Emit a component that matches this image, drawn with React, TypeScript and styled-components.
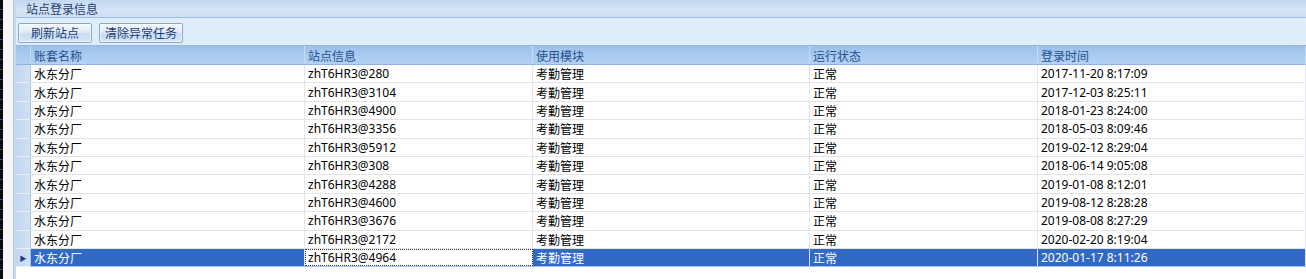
import React from "react";
import styled, { createGlobalStyle } from "styled-components";

const Global = createGlobalStyle`
  html, body { margin: 0; padding: 0; background: #ffffff; overflow: hidden; }
  body { font-family: "Noto Sans", "Noto Sans CJK SC", sans-serif; font-size: 12px; }
`;

const Page = styled.div`
  display: flex;
  width: 1306px;
  height: 279px;
  background: #ffffff;
`;

const EdgeBar = styled.div`
  width: 3px;
  background: repeating-linear-gradient(to bottom, #0a0a0a 0 9px, #2a4f8c 9px 10px);
  flex: none;
`;

const Gutter = styled.div`
  width: 10px;
  background: #f4f6f9;
  border-right: 1px solid #b7c7dc;
  flex: none;
`;

const Panel = styled.div`
  flex: 1;
  display: flex;
  flex-direction: column;
  border-left: 2px solid #c3d7f0;
  min-width: 0;
`;

const TitleBar = styled.div`
  height: 17px;
  display: flex;
  align-items: center;
  padding-left: 10px;
  background: linear-gradient(to bottom, #c4d8f1, #d6e4f6 60%, #cfdff4);
  border-bottom: 1px solid #9ebbe2;
  color: #1e3f6f;
  font-size: 12px;
  font-family: "Noto Sans CJK SC", sans-serif;
`;

const Toolbar = styled.div`
  height: 27px;
  display: flex;
  align-items: center;
  gap: 7px;
  padding-left: 2px;
  background: #e0eefb;
  border-bottom: 1px solid #96b8e0;
`;

const ToolButton = styled.button<{ w: number }>`
  width: ${(p) => p.w}px;
  height: 20px;
  margin-top: 2px;
  padding: 0;
  border: 1px solid #8aa7cc;
  border-radius: 2px;
  background: linear-gradient(to bottom, #f3f8fe, #dce9f8 50%, #c9dcf3 51%, #d6e6f8);
  color: #1b3d72;
  font-family: "Noto Sans CJK SC", sans-serif;
  font-size: 12px;
  line-height: 18px;
  box-shadow: inset 0 0 0 1px rgba(255,255,255,0.6);
`;

const cols = "15px 274px 228px 277px 228px 1fr";

const HeaderRow = styled.div`
  display: grid;
  grid-template-columns: ${cols};
  height: 18px;
  background: linear-gradient(to bottom, #9cc0ea, #a9cbf0 50%, #b3d2f4);
  border-bottom: 1px solid #8fb2de;
`;

const HeaderCell = styled.div`
  display: flex;
  align-items: center;
  padding-left: 3px;
  color: #24508f;
  font-family: "Noto Sans CJK SC", sans-serif;
  font-size: 12px;
  border-right: 1px solid #c7dcf4;
  overflow: hidden;
  white-space: nowrap;
`;

const Row = styled.div<{ selected?: boolean }>`
  display: grid;
  grid-template-columns: ${cols};
  height: 18.4px;
  background: ${(p) => (p.selected ? "#316ac5" : "#ffffff")};
  color: ${(p) => (p.selected ? "#ffffff" : "#000000")};
  box-sizing: border-box;
  border-bottom: 1px solid ${(p) => (p.selected ? "#9fc3ee" : "#e3e3e3")};
`;

const RowHead = styled.div<{ selected?: boolean }>`
  display: flex;
  align-items: center;
  justify-content: center;
  background: linear-gradient(to right, #c1d6f0, #d1e1f5);
  border-right: 1px solid #a9c4e6;
  border-bottom: 1px solid #e9f1fb;
  margin-bottom: -1px;
  color: #1b3d72;
  font-size: 7px;
`;

const Cell = styled.div<{ focus?: boolean }>`
  display: flex;
  align-items: center;
  padding-left: 3px;
  font-size: 12px;
  white-space: nowrap;
  overflow: hidden;
  border-right: 1px solid #dfe6ef;
  box-sizing: border-box;
  ${(p) =>
    p.focus
      ? `background: #ffffff; color: #000000; outline: 1px dotted #333; outline-offset: -1px;`
      : ""}
`;

const CjkCell = styled(Cell)`
  font-family: "Noto Sans CJK SC", sans-serif;
`;

const data: [string, string][] = [
  ["zhT6HR3@280", "2017-11-20 8:17:09"],
  ["zhT6HR3@3104", "2017-12-03 8:25:11"],
  ["zhT6HR3@4900", "2018-01-23 8:24:00"],
  ["zhT6HR3@3356", "2018-05-03 8:09:46"],
  ["zhT6HR3@5912", "2019-02-12 8:29:04"],
  ["zhT6HR3@308", "2018-06-14 9:05:08"],
  ["zhT6HR3@4288", "2019-01-08 8:12:01"],
  ["zhT6HR3@4600", "2019-08-12 8:28:28"],
  ["zhT6HR3@3676", "2019-08-08 8:27:29"],
  ["zhT6HR3@2172", "2020-02-20 8:19:04"],
  ["zhT6HR3@4964", "2020-01-17 8:11:26"],
];

export default function App() {
  return (
    <>
      <Global />
      <Page>
        <EdgeBar />
        <Gutter />
        <Panel>
          <TitleBar>站点登录信息</TitleBar>
          <Toolbar>
            <ToolButton w={74}>刷新站点</ToolButton>
            <ToolButton w={84}>清除异常任务</ToolButton>
          </Toolbar>
          <HeaderRow>
            <HeaderCell />
            <HeaderCell>账套名称</HeaderCell>
            <HeaderCell>站点信息</HeaderCell>
            <HeaderCell>使用模块</HeaderCell>
            <HeaderCell>运行状态</HeaderCell>
            <HeaderCell>登录时间</HeaderCell>
          </HeaderRow>
          {data.map(([site, time], i) => {
            const sel = i === data.length - 1;
            return (
              <Row key={i} selected={sel}>
                <RowHead selected={sel}>{sel ? "▶" : ""}</RowHead>
                <CjkCell>水东分厂</CjkCell>
                <Cell focus={sel}>{site}</Cell>
                <CjkCell>考勤管理</CjkCell>
                <CjkCell>正常</CjkCell>
                <Cell>{time}</Cell>
              </Row>
            );
          })}
        </Panel>
      </Page>
    </>
  );
}
